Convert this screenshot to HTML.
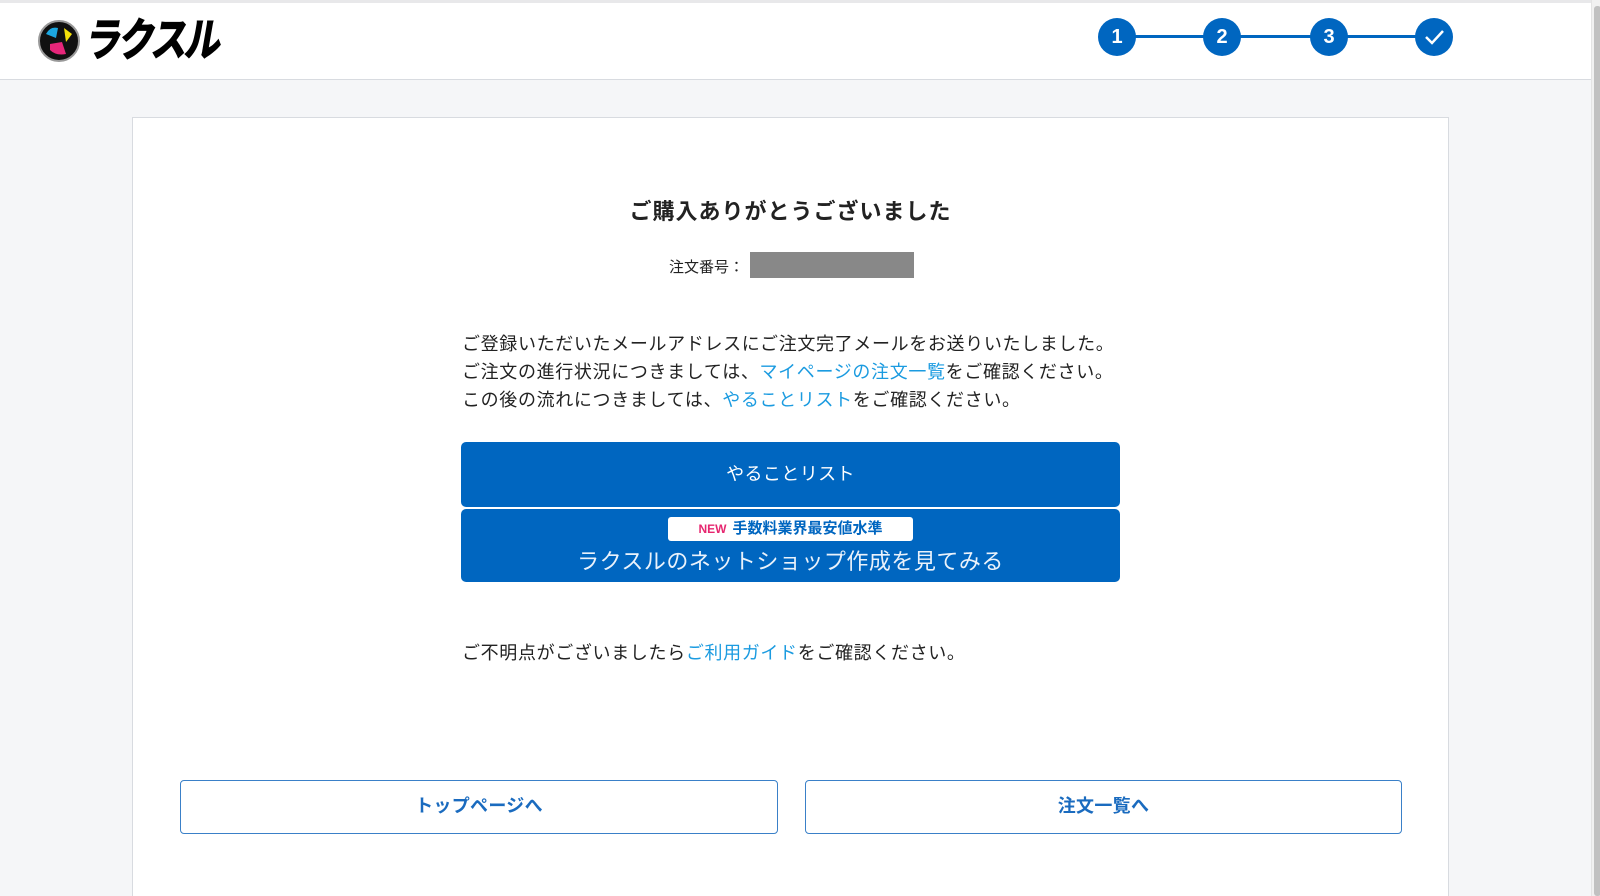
<!DOCTYPE html>
<html><head><meta charset="utf-8">
<style>
*{margin:0;padding:0;box-sizing:border-box}
html,body{width:1600px;height:896px;overflow:hidden}
body{background:#f5f6f8;font-family:"Liberation Sans","Noto Sans CJK JP",sans-serif;color:#222;position:relative}
.hdr{position:absolute;left:0;top:0;width:1591px;height:80px;background:#fff;border-top:3px solid #e8e8ea;border-bottom:1px solid #d8dbe0}
.sb{position:absolute;left:1591px;top:0;width:9px;height:896px;background:#f1f1f1;border-left:1px solid #e4e4e4}
.sb i{position:absolute;left:2px;top:6px;width:7px;height:890px;background:#c1c1c1;border-radius:3px}
.logo{position:absolute;left:38px;top:20px;width:42px;height:42px;border-radius:50%;background:#111;border:2px solid #999}
.logotext{position:absolute;left:86px;top:10px;font-size:46px;font-weight:900;letter-spacing:-4px;transform-origin:left center;transform:scaleX(0.8) skewX(-12deg);color:#000;line-height:60px}
.step{position:absolute;top:18px;width:38px;height:38px;border-radius:50%;background:#0066c0;color:#fff;font-weight:bold;font-size:20px;text-align:center;line-height:38px}
.line{position:absolute;top:35px;height:3px;background:#0066c0;left:1117px;width:317px}
.card{position:absolute;left:132px;top:117px;width:1317px;height:800px;background:#fff;border:1px solid #d8dbe0}
.c{position:absolute;left:0;width:100%;text-align:center}
.p{position:absolute;left:462px;font-size:18px;letter-spacing:0.65px;line-height:28px;color:#222;white-space:nowrap}
a{color:#1b9be0;text-decoration:none}
.btn{position:absolute;left:461px;width:659px;background:#0066c0;color:#fff;text-align:center;border-radius:5px}
.ob{position:absolute;top:780px;height:54px;border:1.5px solid #3a80c8;border-radius:4px;background:#fff;color:#1a6bbf;font-weight:bold;font-size:18px;text-align:center;line-height:51px;letter-spacing:0.3px}
</style></head><body>
<div class="hdr"></div>
<div class="logo">
<svg width="38" height="38" viewBox="0 0 38 38" style="position:absolute;left:0;top:0">
<path d="M6 12 Q10 4 18 6 L16 16 Z" fill="#1ca7e0"/>
<path d="M24 6 L32 12 L26 20 Z" fill="#f5e10a"/>
<path d="M10 22 L22 20 L26 32 Q16 34 10 28 Z" fill="#e6267a"/>
</svg></div>
<div class="logotext">ラクスル</div>
<div class="line"></div>
<div class="step" style="left:1098px">1</div>
<div class="step" style="left:1203px">2</div>
<div class="step" style="left:1310px">3</div>
<div class="step" style="left:1415px"><svg width="38" height="38" viewBox="0 0 38 38"><path d="M11 19 L17 25 L28 13" stroke="#fff" stroke-width="2.5" fill="none"/></svg></div>
<div class="card"></div>
<div class="c" style="top:194px;left:132px;width:1317px;font-size:22px;font-weight:bold;letter-spacing:1px">ご購入ありがとうございました</div>
<div style="position:absolute;left:669px;top:256px;font-size:15px">注文番号：</div>
<div style="position:absolute;left:750px;top:252px;width:164px;height:26px;background:#888"></div>
<div class="p" style="top:330px">ご登録いただいたメールアドレスにご注文完了メールをお送りいたしました。<br>ご注文の進行状況につきましては、<a>マイページの注文一覧</a>をご確認ください。<br>この後の流れにつきましては、<a>やることリスト</a>をご確認ください。</div>
<div class="btn" style="top:442px;height:65px;line-height:65px;font-size:18px;letter-spacing:0.4px">やることリスト</div>
<div class="btn" style="top:509px;height:73px">
<div style="position:absolute;left:207px;top:8px;width:245px;height:24px;background:#fff;border-radius:3px;line-height:24px;font-weight:bold;font-size:15px;color:#0066c0"><span style="color:#e6266f;font-size:12px;margin-right:6px">NEW</span>手数料業界最安値水準</div>
<div style="position:absolute;left:0;width:100%;top:35px;font-size:22px;line-height:36px;color:#eaf2fb;letter-spacing:0.5px">ラクスルのネットショップ作成を見てみる</div>
</div>
<div class="p" style="top:639px">ご不明点がございましたら<a>ご利用ガイド</a>をご確認ください。</div>
<div class="ob" style="left:180px;width:598px">トップページへ</div>
<div class="ob" style="left:805px;width:597px">注文一覧へ</div>
<div class="sb"><i></i></div>
</body></html>
